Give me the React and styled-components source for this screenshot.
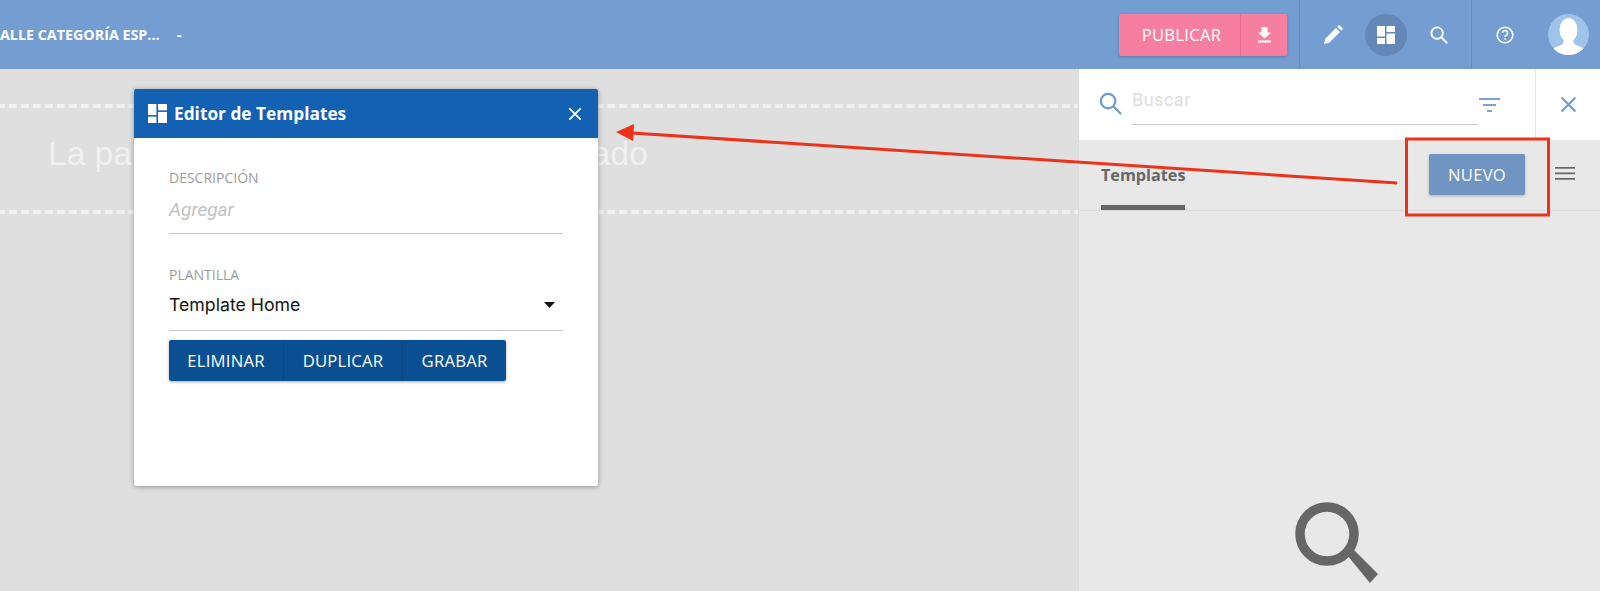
import React from "react";
import styled, { createGlobalStyle } from "styled-components";

const Global = createGlobalStyle`
  html, body { margin: 0; padding: 0; background: #dfdfdf; }
  body { width: 1600px; height: 591px; overflow: hidden; font-family: "Open Sans", "Liberation Sans", sans-serif; }
  * { box-sizing: border-box; }
`;

const Page = styled.div`
  position: relative; width: 1600px; height: 591px; overflow: hidden;
  display: flex; flex-direction: column;
`;
const Header = styled.header`
  height: 69px; flex: none; background: #749dd1; display: flex; align-items: stretch; color: #fff;
`;
const PageTitle = styled.div`
  flex: 1; display: flex; align-items: center; overflow: hidden;
  font-size: 14.3px; font-weight: 700; white-space: nowrap;
`;
const TitleName = styled.span` width: 177px; `;
const Publish = styled.div`
  display: flex; align-self: center; height: 42px; margin-right: 12px; border-radius: 2px;
  background: #f67fa1; box-shadow: 0 1px 3px rgba(0,0,0,.22);
`;
const PublishLabel = styled.div`
  width: 122px; display: flex; align-items: center; justify-content: center;
  font-size: 16.6px; letter-spacing: .3px; border-right: 1px solid #df6f90; padding-left: 4px;
`;
const PublishIcon = styled.div` width: 46px; display: flex; align-items: center; justify-content: center; `;
const Section = styled.div`
  width: ${p => p.$w}px; border-left: 1px solid #658dc0; display: flex; align-items: center; padding-left: ${p => p.$pad}px;
`;
const IconButton = styled.div`
  width: 42px; height: 42px; border-radius: 50%; display: flex; align-items: center; justify-content: center;
  background: ${p => (p.$active ? "#6487b5" : "transparent")}; margin-right: ${p => p.$mr || 11}px; flex: none;
`;
const Avatar = styled.div`
  width: 41px; height: 41px; border-radius: 50%; background: #a0c3eb; overflow: hidden; flex: none;
`;
const Content = styled.div` flex: 1; display: flex; min-height: 0; `;
const Stage = styled.main` flex: 1; background: #dfdfdf; padding-top: 35px; overflow: hidden; `;
const Drop = styled.div`
  height: 110px; width: 1085px; margin-left: -3px;
  border-top: 4px dashed #f1f1f1; border-bottom: 4px dashed #f1f1f1;
  padding: 26px 0 0 51px;
  font-family: "Liberation Sans", sans-serif; font-size: 33.5px; line-height: 40px; color: #f1f1f1; white-space: nowrap;
`;
const Panel = styled.aside`
  width: 522px; flex: none; background: #e8e8e8; border-left: 1px solid #dcdcdc; display: flex; flex-direction: column; align-items: stretch;
`;
const SearchRow = styled.div` height: 71px; flex: none; background: #fff; display: flex; `;
const SearchMain = styled.div`
  flex: 1; display: flex; padding: 21px 0 0 20px;
`;
const SearchGlyph = styled.div` width: 23px; height: 23px; margin-top: 2px; flex: none; `;
const SearchField = styled.div`
  width: 346px; height: 35px; margin-left: 10px; border-bottom: 1px solid #c3c8ce;
  font-family: Roboto, sans-serif; font-size: 18px; line-height: 20px; color: #dedede; letter-spacing: .5px;
`;
const FilterIcon = styled.div` margin: 6px 0 0 1px; `;
const SearchClose = styled.div`
  width: 65px; border-left: 1px solid #e6e6e6; display: flex; align-items: center; justify-content: center;
`;
const TabsRow = styled.div`
  height: 71px; flex: none; border-bottom: 1px solid #dcdcdc; display: flex; align-items: flex-start; padding-left: 22px;
`;
const Tab = styled.div`
  width: 84px; height: 70px; padding-top: 24px; border-bottom: 5px solid #666;
  font-size: 16.200px; font-weight: 700; color: #666; line-height: 22px; white-space: nowrap;
`;
const NewButton = styled.div`
  margin: 14px 0 0 244px; width: 96px; height: 41px; background: #7095c2; border-radius: 2px; color: #fff;
  display: flex; align-items: center; justify-content: center; font-size: 16.600px; letter-spacing: .3px;
  box-shadow: 0 1px 3px rgba(0,0,0,.25);
`;
const MenuIcon = styled.div` margin: 23px 0 0 30px; `;
const Empty = styled.div` flex: 1; display: flex; justify-content: center; padding: 291px 4px 0 0; `;

const Modal = styled.section`
  position: absolute; left: 134px; top: 89px; width: 464px; height: 397px; background: #fff;
  border-radius: 2px; box-shadow: 0 1px 5px rgba(0,0,0,.35); display: flex; flex-direction: column;
`;
const ModalHead = styled.div`
  height: 49px; flex: none; background: #1261b3; color: #fff; border-radius: 2px 2px 0 0;
  display: flex; align-items: center; padding: 0 16px 0 14px;
`;
const ModalTitle = styled.div` flex: 1; margin-left: 7px; font-size: 17.300px; font-weight: 700; `;
const ModalBody = styled.div` padding: 32px 35px 0; display: flex; flex-direction: column; `;
const Field = styled.div`
  height: ${p => p.$h}px; border-bottom: 1px solid #c4c4c4; margin-bottom: ${p => p.$mb}px; display: flex; flex-direction: column;
`;
const FieldLabel = styled.div` font-size: 14px; line-height: 16px; color: #9c9c9c; `;
const Placeholder = styled.div`
  font-family: Roboto, sans-serif; font-style: italic; font-size: 19px; line-height: 24px; margin-top: 12px; color: #c2c2c2;
`;
const SelectValue = styled.div`
  display: flex; align-items: center; justify-content: space-between; padding-right: 8px; margin-top: 11px;
  font-family: Inter, Roboto, sans-serif; font-size: 17.700px; line-height: 22px; color: #151515;
`;
const Actions = styled.div`
  display: flex; align-self: flex-start; height: 41px; border-radius: 2px; box-shadow: 0 1px 3px rgba(0,0,0,.35);
`;
const Action = styled.div`
  width: ${p => p.$w}px; background: #0a4f91; color: #fff; font-size: 16.700px; letter-spacing: .2px;
  display: flex; align-items: center; justify-content: center;
  border-right: 1px solid #0b4682;
  &:first-child { border-radius: 2px 0 0 2px; }
  &:last-child { border-right: 0; border-radius: 0 2px 2px 0; }
`;
const Annotation = styled.svg` position: absolute; inset: 0; pointer-events: none; `;

const Layout = ({ size, fill = "#fff" }) => (
  <svg width={size} height={size} viewBox="0 0 18 18" fill={fill}>
    <rect x="0" y="0" width="8" height="10.5" /><rect x="0" y="12" width="8" height="6" />
    <rect x="9.5" y="0" width="8.5" height="6" /><rect x="9.5" y="7.5" width="8.5" height="10.5" />
  </svg>
);
const Cross = ({ size, color, w = 2 }) => (
  <svg width={size} height={size} viewBox="0 0 16 16" stroke={color} strokeWidth={w} fill="none">
    <path d="M1.5 1.5 14.5 14.5M14.5 1.5 1.5 14.5" />
  </svg>
);
const Magnifier = ({ size, color, w = 2.4 }) => (
  <svg width={size} height={size} viewBox="0 0 24 24" fill="none" stroke={color} strokeWidth={w}>
    <circle cx="9.5" cy="9.5" r="7.6" /><path d="M15 15 23 23" />
  </svg>
);

export default function App() {
  return (
    <Page>
      <Global />
      <Header>
        <PageTitle>
          <TitleName>ALLE CATEGORÍA ESP...</TitleName>
          <span>-</span>
        </PageTitle>
        <Publish>
          <PublishLabel>PUBLICAR</PublishLabel>
          <PublishIcon>
            <svg width="15" height="16" viewBox="0 0 15 16" fill="#fff">
              <path d="M4.5 0h6v5.5H14L7.5 11.5 1 5.500h3.500z" /><rect x="1" y="13.500" width="13" height="2" />
            </svg>
          </PublishIcon>
        </Publish>
        <Section $w={172} $pad={12}>
          <IconButton>
            <svg width="20" height="20" viewBox="0 0 20 20" fill="#fff">
              <path d="M1 19l1.300-5.200L13 3l4 4L6.200 17.700z" /><path d="M14.200 1.800 15.500.6a1 1 0 0 1 1.400 0l2.500 2.500a1 1 0 0 1 0 1.400l-1.200 1.200z" />
            </svg>
          </IconButton>
          <IconButton $active>
            <Layout size={18} />
          </IconButton>
          <IconButton>
            <Magnifier size={18} color="#fff" w={2.500} />
          </IconButton>
        </Section>
        <Section $w={129} $pad={12}>
          <IconButton $mr={22}>
            <svg width="18" height="18" viewBox="0 0 18 18" fill="none" stroke="#fff" strokeWidth="1.600">
              <circle cx="9" cy="9" r="7.800" />
              <path d="M6.500 7a2.500 2.500 0 1 1 3.800 2.100C9.400 9.700 9 10 9 11" />
              <path d="M9 12.300v1.400" />
            </svg>
          </IconButton>
          <Avatar>
            <svg width="41" height="41" viewBox="0 0 41 41" fill="#fff">
              <ellipse cx="20.500" cy="16" rx="9" ry="12" />
              <path d="M16 25h9l1 5 9 4 3 7H3l3-7 9-4z" />
            </svg>
          </Avatar>
        </Section>
      </Header>
      <Content>
        <Stage>
          <Drop>La pantalla no tiene contenido publicado</Drop>
        </Stage>
        <Panel>
          <SearchRow>
            <SearchMain>
              <SearchGlyph><Magnifier size={23} color="#6f9bcf" w={2.300} /></SearchGlyph>
              <SearchField>Buscar</SearchField>
              <FilterIcon>
                <svg width="21" height="15" viewBox="0 0 21 15" fill="#7ba2d3">
                  <rect x="0" y="0" width="21" height="2" /><rect x="4" y="6" width="13" height="2" /><rect x="8" y="12" width="5" height="2" />
                </svg>
              </FilterIcon>
            </SearchMain>
            <SearchClose><Cross size={17} color="#6f9bcf" /></SearchClose>
          </SearchRow>
          <TabsRow>
            <Tab>Templates</Tab>
            <NewButton>NUEVO</NewButton>
            <MenuIcon>
              <svg width="20" height="13" viewBox="0 0 20 13" fill="#666">
                <rect y="0" width="20" height="1.700" /><rect y="5.500" width="20" height="1.700" /><rect y="11" width="20" height="1.700" />
              </svg>
            </MenuIcon>
          </TabsRow>
          <Empty>
            <svg width="85" height="85" viewBox="0 0 85 85" fill="none" stroke="#666" strokeWidth="9.500">
              <circle cx="32" cy="32" r="27" />
              <path d="M52 53l6-6 25 25-8 9z" fill="#666" stroke="none" />
            </svg>
          </Empty>
        </Panel>
      </Content>
      <Modal>
        <ModalHead>
          <Layout size={19} />
          <ModalTitle>Editor de Templates</ModalTitle>
          <Cross size={14} color="#fff" />
        </ModalHead>
        <ModalBody>
          <Field $h={64} $mb={33}>
            <FieldLabel>DESCRIPCIÓN</FieldLabel>
            <Placeholder>Agregar</Placeholder>
          </Field>
          <Field $h={64} $mb={9}>
            <FieldLabel>PLANTILLA</FieldLabel>
            <SelectValue>
              Template Home
              <svg width="11" height="6" viewBox="0 0 11 6" fill="#151515"><path d="M0 0h11L5.500 6z" /></svg>
            </SelectValue>
          </Field>
          <Actions>
            <Action $w={115}>ELIMINAR</Action>
            <Action $w={119}>DUPLICAR</Action>
            <Action $w={103}>GRABAR</Action>
          </Actions>
        </ModalBody>
      </Modal>
      <Annotation width="1600" height="591" viewBox="0 0 1600 591">
        <path d="M1397 183 632 133" stroke="#ee3219" strokeWidth="3" fill="none" />
        <path d="M616 132 634 124 633 141z" fill="#ee3219" />
        <rect x="1406.500" y="139" width="142" height="76" stroke="#ee3219" strokeWidth="3" fill="none" />
      </Annotation>
    </Page>
  );
}
